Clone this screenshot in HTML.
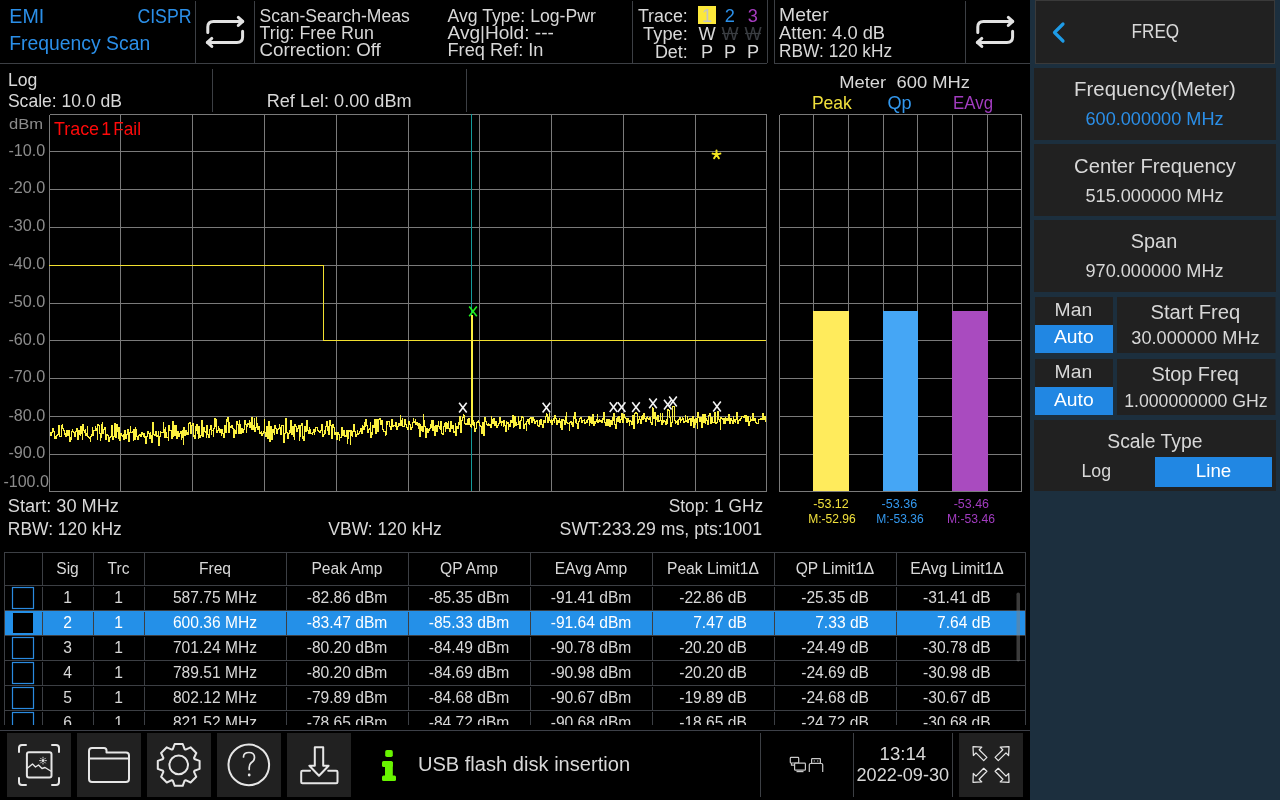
<!DOCTYPE html>
<html><head><meta charset="utf-8"><title>EMI Frequency Scan</title>
<style>
html,body{margin:0;padding:0;background:#000;width:1280px;height:800px;overflow:hidden}
svg{display:block;font-family:"Liberation Sans", sans-serif;will-change:transform}
</style></head><body>
<svg width="1280" height="800" viewBox="0 0 1280 800">
<rect width="1280" height="800" fill="#000"/>
<line x1="0" y1="63.5" x2="767" y2="63.5" stroke="#3c3f44" stroke-width="1"/>
<line x1="774" y1="63.5" x2="1030" y2="63.5" stroke="#3c3f44" stroke-width="1"/>
<line x1="195.5" y1="1" x2="195.5" y2="63" stroke="#3c3f44" stroke-width="1"/>
<line x1="254.5" y1="1" x2="254.5" y2="63" stroke="#3c3f44" stroke-width="1"/>
<line x1="632.5" y1="1" x2="632.5" y2="63" stroke="#3c3f44" stroke-width="1"/>
<line x1="767.5" y1="0" x2="767.5" y2="63" stroke="#3c3f44" stroke-width="1"/>
<line x1="774.5" y1="0" x2="774.5" y2="63" stroke="#3c3f44" stroke-width="1"/>
<line x1="965.5" y1="1" x2="965.5" y2="63" stroke="#3c3f44" stroke-width="1"/>
<text x="9.3" y="23.0" font-size="20.3" fill="#2b8fe8" text-anchor="start" textLength="34.9" lengthAdjust="spacingAndGlyphs">EMI</text>
<text x="137.4" y="23.0" font-size="20.3" fill="#2b8fe8" text-anchor="start" textLength="54.1" lengthAdjust="spacingAndGlyphs">CISPR</text>
<text x="9.3" y="49.7" font-size="19.6" fill="#2b8fe8" text-anchor="start" textLength="140.9" lengthAdjust="spacingAndGlyphs">Frequency Scan</text>
<text x="259.5" y="22.1" font-size="18.3" fill="#d8d8d8" text-anchor="start" textLength="150.2" lengthAdjust="spacingAndGlyphs">Scan-Search-Meas</text>
<text x="259.5" y="38.8" font-size="18.3" fill="#d8d8d8" text-anchor="start" textLength="114.3" lengthAdjust="spacingAndGlyphs">Trig: Free Run</text>
<text x="259.5" y="55.9" font-size="18.3" fill="#d8d8d8" text-anchor="start" textLength="121.3" lengthAdjust="spacingAndGlyphs">Correction: Off</text>
<text x="447.5" y="22.0" font-size="18.3" fill="#d8d8d8" text-anchor="start" textLength="148.3" lengthAdjust="spacingAndGlyphs">Avg Type: Log-Pwr</text>
<text x="447.5" y="38.8" font-size="18.3" fill="#d8d8d8" text-anchor="start" textLength="106.4" lengthAdjust="spacingAndGlyphs">Avg|Hold: ---</text>
<text x="447.5" y="55.7" font-size="18.3" fill="#d8d8d8" text-anchor="start" textLength="95.9" lengthAdjust="spacingAndGlyphs">Freq Ref: In</text>
<text x="637.9" y="22.0" font-size="18.3" fill="#d8d8d8" text-anchor="start" textLength="49.9" lengthAdjust="spacingAndGlyphs">Trace:</text>
<text x="643.1" y="39.7" font-size="18.3" fill="#d8d8d8" text-anchor="start" textLength="44.7" lengthAdjust="spacingAndGlyphs">Type:</text>
<text x="654.9" y="57.5" font-size="18.3" fill="#d8d8d8" text-anchor="start" textLength="32.9" lengthAdjust="spacingAndGlyphs">Det:</text>
<rect x="698" y="6" width="18" height="18" fill="#fce83a"/>
<text x="707.0" y="22.0" font-size="18.2" fill="#c4c4c4" text-anchor="middle">1</text>
<text x="729.7" y="22.0" font-size="18.2" fill="#2b8fe8" text-anchor="middle">2</text>
<text x="752.8" y="22.0" font-size="18.2" fill="#a63cc0" text-anchor="middle">3</text>
<text x="707.0" y="39.7" font-size="18.2" fill="#d8d8d8" text-anchor="middle">W</text>
<text x="730.0" y="39.7" font-size="18.2" fill="#3a3d42" text-anchor="middle">W</text>
<text x="753.0" y="39.7" font-size="18.2" fill="#3a3d42" text-anchor="middle">W</text>
<line x1="722" y1="33.5" x2="738" y2="33.5" stroke="#3a3d42" stroke-width="1.2"/>
<line x1="745" y1="33.5" x2="761" y2="33.5" stroke="#3a3d42" stroke-width="1.2"/>
<text x="707.0" y="57.5" font-size="18.2" fill="#d8d8d8" text-anchor="middle">P</text>
<text x="730.0" y="57.5" font-size="18.2" fill="#d8d8d8" text-anchor="middle">P</text>
<text x="753.0" y="57.5" font-size="18.2" fill="#d8d8d8" text-anchor="middle">P</text>
<text x="779.1" y="21.0" font-size="18.6" fill="#d8d8d8" text-anchor="start" textLength="49.5" lengthAdjust="spacingAndGlyphs">Meter</text>
<text x="779.1" y="38.9" font-size="18.3" fill="#d8d8d8" text-anchor="start" textLength="106.0" lengthAdjust="spacingAndGlyphs">Atten: 4.0 dB</text>
<text x="779.1" y="56.9" font-size="18.6" fill="#d8d8d8" text-anchor="start" textLength="113.0" lengthAdjust="spacingAndGlyphs">RBW: 120 kHz</text>
<g transform="translate(0,0)" fill="none" stroke="#e2e2e2" stroke-width="3" stroke-linecap="round" stroke-linejoin="round"><path d="M207.8,32.6 V27 Q207.8,21.4 213.5,21.4 H242.5"/><path d="M238.3,17.4 L242.8,21.4 L238.3,25.4"/><path d="M242.6,31.2 V37 Q242.6,42.4 237,42.4 H207.5"/><path d="M211.8,38.4 L207.3,42.4 L211.8,46.4"/></g>
<g transform="translate(770,0)" fill="none" stroke="#e2e2e2" stroke-width="3" stroke-linecap="round" stroke-linejoin="round"><path d="M207.8,32.6 V27 Q207.8,21.4 213.5,21.4 H242.5"/><path d="M238.3,17.4 L242.8,21.4 L238.3,25.4"/><path d="M242.6,31.2 V37 Q242.6,42.4 237,42.4 H207.5"/><path d="M211.8,38.4 L207.3,42.4 L211.8,46.4"/></g>
<line x1="212.5" y1="69" x2="212.5" y2="112" stroke="#3c3f44" stroke-width="1"/>
<line x1="466.5" y1="69" x2="466.5" y2="112" stroke="#3c3f44" stroke-width="1"/>
<text x="7.9" y="85.9" font-size="18.2" fill="#d8d8d8" text-anchor="start" textLength="29.4" lengthAdjust="spacingAndGlyphs">Log</text>
<text x="7.9" y="106.9" font-size="18.6" fill="#d8d8d8" text-anchor="start" textLength="114.2" lengthAdjust="spacingAndGlyphs">Scale: 10.0 dB</text>
<text x="266.7" y="106.9" font-size="18.6" fill="#d8d8d8" text-anchor="start" textLength="144.9" lengthAdjust="spacingAndGlyphs">Ref Lel: 0.00 dBm</text>
<text x="839.2" y="87.8" font-size="17.4" fill="#d8d8d8" text-anchor="start" textLength="130.9" lengthAdjust="spacingAndGlyphs">Meter  600 MHz</text>
<text x="811.9" y="108.6" font-size="17.9" fill="#f0e03c" text-anchor="start" textLength="40.0" lengthAdjust="spacingAndGlyphs">Peak</text>
<text x="887.5" y="108.6" font-size="17.9" fill="#3398ee" text-anchor="start" textLength="24.2" lengthAdjust="spacingAndGlyphs">Qp</text>
<text x="953.1" y="108.6" font-size="17.9" fill="#a23cc0" text-anchor="start" textLength="39.9" lengthAdjust="spacingAndGlyphs">EAvg</text>
<path d="M49.5,114.5V492.0M120.5,114.5V492.0M192.5,114.5V492.0M264.5,114.5V492.0M336.5,114.5V492.0M408.5,114.5V492.0M479.5,114.5V492.0M551.5,114.5V492.0M623.5,114.5V492.0M695.5,114.5V492.0M766.5,114.5V492.0M49.5,114.5H767.0M49.5,151.5H767.0M49.5,189.5H767.0M49.5,227.5H767.0M49.5,265.5H767.0M49.5,303.5H767.0M49.5,340.5H767.0M49.5,378.5H767.0M49.5,416.5H767.0M49.5,454.5H767.0M49.5,491.5H767.0" stroke="#7a7a7a" stroke-width="1" fill="none" shape-rendering="crispEdges"/>
<text x="9.1" y="128.8" font-size="14.8" fill="#8c8c8c" text-anchor="start" textLength="34.1" lengthAdjust="spacingAndGlyphs">dBm</text>
<text x="8.4" y="156.0" font-size="17.0" fill="#8c8c8c" text-anchor="start" textLength="36.9" lengthAdjust="spacingAndGlyphs">-10.0</text>
<text x="8.4" y="193.0" font-size="17.0" fill="#8c8c8c" text-anchor="start" textLength="36.9" lengthAdjust="spacingAndGlyphs">-20.0</text>
<text x="8.4" y="231.0" font-size="17.0" fill="#8c8c8c" text-anchor="start" textLength="36.9" lengthAdjust="spacingAndGlyphs">-30.0</text>
<text x="8.4" y="269.0" font-size="17.0" fill="#8c8c8c" text-anchor="start" textLength="36.9" lengthAdjust="spacingAndGlyphs">-40.0</text>
<text x="8.4" y="307.0" font-size="17.0" fill="#8c8c8c" text-anchor="start" textLength="36.9" lengthAdjust="spacingAndGlyphs">-50.0</text>
<text x="8.4" y="345.0" font-size="17.0" fill="#8c8c8c" text-anchor="start" textLength="36.9" lengthAdjust="spacingAndGlyphs">-60.0</text>
<text x="8.4" y="382.0" font-size="17.0" fill="#8c8c8c" text-anchor="start" textLength="36.9" lengthAdjust="spacingAndGlyphs">-70.0</text>
<text x="8.4" y="420.6" font-size="17.0" fill="#8c8c8c" text-anchor="start" textLength="36.9" lengthAdjust="spacingAndGlyphs">-80.0</text>
<text x="8.4" y="457.8" font-size="17.0" fill="#8c8c8c" text-anchor="start" textLength="36.9" lengthAdjust="spacingAndGlyphs">-90.0</text>
<text x="3.4" y="487.0" font-size="17.0" fill="#8c8c8c" text-anchor="start" textLength="45.4" lengthAdjust="spacingAndGlyphs">-100.0</text>
<text x="53.9" y="135.0" font-size="17.7" fill="#ff0a0a" text-anchor="start" textLength="45.2" lengthAdjust="spacingAndGlyphs">Trace</text>
<text x="106.2" y="135.0" font-size="17.7" fill="#ff0a0a" text-anchor="middle">1</text>
<text x="113.3" y="135.0" font-size="17.7" fill="#ff0a0a" text-anchor="start" textLength="27.7" lengthAdjust="spacingAndGlyphs">Fail</text>
<path d="M471.5,114V491" stroke="#139a9a" stroke-width="1" shape-rendering="crispEdges"/>
<path d="M49,265.5H323.5V340.5H766" stroke="#f2e030" stroke-width="1" fill="none" shape-rendering="crispEdges"/>
<path d="M50.5,432V436M51.5,432V436M52.5,428V433M53.5,428V432M54.5,431V439M55.5,436V439M56.5,435V439M57.5,434V436M58.5,425V435M59.5,425V437M60.5,436V437M61.5,425V437M62.5,424V429M63.5,428V431M64.5,430V435M65.5,433V437M66.5,430V437M67.5,430V436M68.5,430V436M69.5,430V442M70.5,437V442M71.5,431V440M72.5,429V432M73.5,431V433M74.5,432V437M75.5,431V437M76.5,428V432M77.5,428V440M78.5,430V440M79.5,430V435M80.5,426V436M81.5,426V434M82.5,424V440M83.5,424V431M84.5,430V433M85.5,429V436M86.5,433V436M87.5,426V437M88.5,436V438M89.5,437V439M90.5,436V442M91.5,434V437M92.5,427V436M93.5,430V436M94.5,430V431M95.5,426V431M96.5,428V431M97.5,424V440M98.5,424V426M99.5,425V434M100.5,433V441M101.5,424V438M102.5,422V434M103.5,429V434M104.5,427V430M105.5,427V440M106.5,434V440M107.5,434V436M108.5,435V442M109.5,437V442M110.5,436V438M111.5,425V437M112.5,425V440M113.5,436V440M114.5,423V437M115.5,423V438M116.5,424V438M117.5,424V432M118.5,427V439M119.5,427V441M120.5,433V441M121.5,433V436M122.5,435V437M123.5,434V440M124.5,430V440M125.5,430V439M126.5,434V439M127.5,429V435M128.5,429V442M129.5,432V442M130.5,426V433M131.5,432V433M132.5,431V433M133.5,429V441M134.5,429V440M135.5,427V440M136.5,429V437M137.5,436V440M138.5,435V440M139.5,434V436M140.5,434V437M141.5,432V437M142.5,432V435M143.5,433V437M144.5,433V438M145.5,436V444M146.5,436V444M147.5,431V437M148.5,431V434M149.5,433V439M150.5,432V439M151.5,435V443M152.5,422V443M153.5,422V435M154.5,434V436M155.5,431V436M156.5,431V437M157.5,435V437M158.5,431V446M159.5,436V446M160.5,431V437M161.5,432V433M162.5,432V433M163.5,422V433M164.5,429V438M165.5,427V438M166.5,432V438M167.5,437V438M168.5,425V441M169.5,425V431M170.5,430V431M171.5,430V439M172.5,421V439M173.5,421V437M174.5,425V436M175.5,425V436M176.5,425V439M177.5,431V439M178.5,431V437M179.5,433V437M180.5,431V434M181.5,431V440M182.5,430V438M183.5,427V445M184.5,427V436M185.5,430V436M186.5,430V435M187.5,432V435M188.5,423V435M189.5,422V424M190.5,422V434M191.5,425V434M192.5,423V426M193.5,423V437M194.5,435V439M195.5,426V439M196.5,424V431M197.5,424V434M198.5,426V439M199.5,426V438M200.5,435V438M201.5,420V436M202.5,420V437M203.5,427V437M204.5,427V432M205.5,431V433M206.5,425V438M207.5,425V435M208.5,434V438M209.5,429V438M210.5,425V430M211.5,425V435M212.5,430V431M213.5,428V437M214.5,418V429M215.5,418V427M216.5,419V433M217.5,430V433M218.5,426V431M219.5,428V433M220.5,429V433M221.5,429V436M222.5,429V434M223.5,433V438M224.5,425V438M225.5,425V433M226.5,419V433M227.5,417V422M228.5,417V433M229.5,422V433M230.5,426V428M231.5,425V428M232.5,425V429M233.5,428V438M234.5,429V438M235.5,430V434M236.5,421V434M237.5,421V425M238.5,424V434M239.5,420V434M240.5,424V434M241.5,428V434M242.5,428V433M243.5,429V433M244.5,420V430M245.5,420V425M246.5,424V433M247.5,423V427M248.5,423V425M249.5,420V428M250.5,422V428M251.5,417V430M252.5,417V430M253.5,425V430M254.5,418V432M255.5,427V432M256.5,417V428M257.5,423V430M258.5,426V430M259.5,426V434M260.5,432V434M261.5,431V436M262.5,433V436M263.5,431V434M264.5,419V433M265.5,432V437M266.5,426V437M267.5,426V439M268.5,421V439M269.5,421V442M270.5,426V442M271.5,426V440M272.5,429V440M273.5,429V433M274.5,425V435M275.5,425V429M276.5,428V434M277.5,429V434M278.5,428V430M279.5,424V429M280.5,427V435M281.5,425V435M282.5,425V426M283.5,425V443M284.5,433V443M285.5,418V434M286.5,418V433M287.5,432V439M288.5,433V439M289.5,430V434M290.5,420V433M291.5,420V435M292.5,426V435M293.5,426V437M294.5,424V440M295.5,424V427M296.5,426V432M297.5,428V432M298.5,425V429M299.5,425V441M300.5,425V437M301.5,423V426M302.5,423V439M303.5,436V441M304.5,426V441M305.5,426V432M306.5,420V432M307.5,420V431M308.5,430V434M309.5,427V434M310.5,429V434M311.5,433V434M312.5,432V435M313.5,429V433M314.5,429V435M315.5,427V432M316.5,427V428M317.5,427V431M318.5,430V432M319.5,431V433M320.5,430V433M321.5,424V431M322.5,424V437M323.5,434V437M324.5,430V435M325.5,426V434M326.5,421V427M327.5,421V431M328.5,426V435M329.5,420V435M330.5,420V426M331.5,425V439M332.5,424V439M333.5,424V428M334.5,427V435M335.5,432V435M336.5,432V440M337.5,432V440M338.5,432V435M339.5,434V441M340.5,437V438M341.5,427V438M342.5,427V436M343.5,430V436M344.5,430V437M345.5,435V437M346.5,430V437M347.5,430V444M348.5,430V439M349.5,430V432M350.5,430V445M351.5,430V436M352.5,431V437M353.5,424V432M354.5,424V432M355.5,431V437M356.5,434V437M357.5,430V435M358.5,433V435M359.5,431V434M360.5,428V432M361.5,428V434M362.5,425V434M363.5,426V430M364.5,422V430M365.5,419V427M366.5,419V426M367.5,425V433M368.5,429V433M369.5,428V430M370.5,422V438M371.5,432V438M372.5,425V435M373.5,425V428M374.5,419V428M375.5,419V434M376.5,419V434M377.5,419V432M378.5,419V432M379.5,418V420M380.5,418V425M381.5,420V425M382.5,420V430M383.5,429V432M384.5,431V432M385.5,431V436M386.5,421V435M387.5,421V425M388.5,421V422M389.5,421V427M390.5,426V430M391.5,419V430M392.5,419V427M393.5,425V427M394.5,425V426M395.5,422V427M396.5,422V430M397.5,426V430M398.5,423V427M399.5,423V426M400.5,415V426M401.5,420V426M402.5,418V427M403.5,426V427M404.5,419V427M405.5,419V425M406.5,424V428M407.5,427V430M408.5,421V430M409.5,421V425M410.5,424V430M411.5,427V430M412.5,422V428M413.5,418V423M414.5,421V423M415.5,419V425M416.5,422V425M417.5,422V426M418.5,423V429M419.5,423V437M420.5,424V437M421.5,426V431M422.5,426V432M423.5,414V432M424.5,420V427M425.5,426V438M426.5,428V438M427.5,428V433M428.5,429V433M429.5,428V431M430.5,424V429M431.5,420V428M432.5,420V431M433.5,420V431M434.5,426V436M435.5,425V436M436.5,425V432M437.5,425V432M438.5,421V427M439.5,426V429M440.5,421V430M441.5,421V434M442.5,433V435M443.5,426V435M444.5,423V427M445.5,422V432M446.5,422V429M447.5,423V429M448.5,421V429M449.5,428V432M450.5,421V432M451.5,421V429M452.5,425V429M453.5,425V433M454.5,431V433M455.5,423V436M456.5,426V436M457.5,426V429M458.5,422V429M459.5,416V425M460.5,416V433M461.5,420V433M462.5,417V421M463.5,414V418M464.5,415V424M465.5,423V425M466.5,423V425M467.5,419V425M468.5,418V425M469.5,418V425M470.5,424V427M471.5,424V428M472.5,420V425M473.5,420V426M474.5,422V432M475.5,428V432M476.5,422V429M477.5,421V423M478.5,420V423M479.5,422V426M480.5,425V427M481.5,426V434M482.5,422V434M483.5,422V436M484.5,417V436M485.5,417V422M486.5,421V425M487.5,424V426M488.5,423V426M489.5,424V426M490.5,424V428M491.5,416V428M492.5,419V424M493.5,418V424M494.5,418V426M495.5,421V426M496.5,421V428M497.5,425V428M498.5,423V426M499.5,417V424M500.5,417V423M501.5,421V426M502.5,421V423M503.5,420V427M504.5,420V426M505.5,425V432M506.5,421V432M507.5,422V424M508.5,422V430M509.5,424V427M510.5,420V427M511.5,420V423M512.5,415V423M513.5,415V428M514.5,416V427M515.5,416V426M516.5,422V426M517.5,424V425M518.5,416V425M519.5,421V429M520.5,420V429M521.5,416V421M522.5,416V418M523.5,417V429M524.5,424V429M525.5,423V425M526.5,421V431M527.5,419V422M528.5,419V424M529.5,418V425M530.5,417V419M531.5,417V423M532.5,417V423M533.5,417V421M534.5,419V424M535.5,421V424M536.5,420V422M537.5,420V426M538.5,425V427M539.5,420V427M540.5,419V425M541.5,419V425M542.5,424V428M543.5,420V428M544.5,420V423M545.5,416V423M546.5,413V417M547.5,414V423M548.5,417V423M549.5,413V421M550.5,420V423M551.5,419V425M552.5,420V425M553.5,418V421M554.5,415V423M555.5,415V419M556.5,418V425M557.5,420V425M558.5,420V423M559.5,418V423M560.5,421V428M561.5,419V430M562.5,419V430M563.5,419V421M564.5,420V425M565.5,416V425M566.5,412V423M567.5,422V424M568.5,423V424M569.5,422V431M570.5,421V423M571.5,421V425M572.5,422V427M573.5,416V427M574.5,412V419M575.5,412V423M576.5,419V424M577.5,423V429M578.5,421V429M579.5,418V422M580.5,417V419M581.5,417V423M582.5,420V423M583.5,420V421M584.5,419V424M585.5,422V424M586.5,420V423M587.5,419V423M588.5,416V420M589.5,416V426M590.5,417V423M591.5,417V424M592.5,414V424M593.5,414V426M594.5,421V426M595.5,421V424M596.5,419V422M597.5,414V423M598.5,420V423M599.5,419V422M600.5,420V422M601.5,420V423M602.5,418V423M603.5,412V420M604.5,412V423M605.5,422V426M606.5,419V426M607.5,419V426M608.5,419V426M609.5,419V427M610.5,420V427M611.5,420V425M612.5,417V425M613.5,413V421M614.5,413V425M615.5,424V429M616.5,418V429M617.5,417V422M618.5,416V422M619.5,416V423M620.5,419V423M621.5,413V420M622.5,413V423M623.5,414V423M624.5,414V418M625.5,417V419M626.5,418V423M627.5,418V423M628.5,418V422M629.5,420V426M630.5,420V422M631.5,421V425M632.5,415V425M633.5,415V429M634.5,413V429M635.5,412V414M636.5,412V414M637.5,413V424M638.5,419V423M639.5,416V420M640.5,419V424M641.5,416V424M642.5,415V420M643.5,413V420M644.5,413V419M645.5,418V422M646.5,417V422M647.5,416V419M648.5,418V420M649.5,417V420M650.5,417V423M651.5,422V425M652.5,407V425M653.5,408V419M654.5,412V419M655.5,412V426M656.5,417V420M657.5,415V422M658.5,415V422M659.5,420V422M660.5,413V421M661.5,420V425M662.5,413V425M663.5,420V423M664.5,420V422M665.5,421V425M666.5,419V425M667.5,409V424M668.5,409V411M669.5,410V418M670.5,417V427M671.5,422V427M672.5,406V423M673.5,406V407M674.5,406V421M675.5,420V424M676.5,421V423M677.5,420V425M678.5,419V425M679.5,417V420M680.5,417V423M681.5,419V421M682.5,417V420M683.5,418V423M684.5,421V423M685.5,415V422M686.5,420V422M687.5,416V423M688.5,419V423M689.5,418V420M690.5,418V426M691.5,418V426M692.5,416V422M693.5,416V428M694.5,419V428M695.5,418V425M696.5,418V423M697.5,412V429M698.5,412V418M699.5,417V422M700.5,417V422M701.5,417V428M702.5,414V428M703.5,414V423M704.5,414V423M705.5,414V424M706.5,418V421M707.5,420V425M708.5,415V425M709.5,413V416M710.5,413V424M711.5,417V424M712.5,417V423M713.5,422V423M714.5,412V423M715.5,412V424M716.5,422V424M717.5,411V423M718.5,411V420M719.5,419V422M720.5,417V430M721.5,417V419M722.5,418V420M723.5,418V424M724.5,418V424M725.5,417V424M726.5,418V421M727.5,418V421M728.5,414V421M729.5,414V424M730.5,418V424M731.5,418V421M732.5,420V424M733.5,416V424M734.5,419V422M735.5,419V423M736.5,412V420M737.5,412V424M738.5,420V424M739.5,419V421M740.5,418V421M741.5,416V419M742.5,416V417M743.5,416V418M744.5,415V418M745.5,415V422M746.5,415V422M747.5,416V422M748.5,416V426M749.5,421V426M750.5,417V422M751.5,419V421M752.5,413V421M753.5,413V421M754.5,418V421M755.5,418V423M756.5,422V424M757.5,423V424M758.5,419V424M759.5,419V420M760.5,418V420M761.5,418V420M762.5,413V420M763.5,413V420M764.5,416V420M765.5,416V422" stroke="#fbf040" stroke-width="1" fill="none" shape-rendering="crispEdges"/>
<rect x="471" y="315" width="2" height="110" fill="#fbf040"/>
<path d="M469.2,306.40000000000003L476.8,316.2M476.8,306.40000000000003L469.2,316.2" stroke="#22ee22" stroke-width="1.6" fill="none"/>
<path d="M459.09999999999997,402.8L466.7,412.59999999999997M466.7,402.8L459.09999999999997,412.59999999999997" stroke="#f4f4f4" stroke-width="1.6" fill="none"/>
<path d="M542.6,402.8L550.1999999999999,412.59999999999997M550.1999999999999,402.8L542.6,412.59999999999997" stroke="#f4f4f4" stroke-width="1.6" fill="none"/>
<path d="M609.7,402.3L617.3,412.09999999999997M617.3,402.3L609.7,412.09999999999997" stroke="#f4f4f4" stroke-width="1.6" fill="none"/>
<path d="M617.8000000000001,402.3L625.4,412.09999999999997M625.4,402.3L617.8000000000001,412.09999999999997" stroke="#f4f4f4" stroke-width="1.6" fill="none"/>
<path d="M632.2,402.3L639.8,412.09999999999997M639.8,402.3L632.2,412.09999999999997" stroke="#f4f4f4" stroke-width="1.6" fill="none"/>
<path d="M649.2,398.40000000000003L656.8,408.2M656.8,398.40000000000003L649.2,408.2" stroke="#f4f4f4" stroke-width="1.6" fill="none"/>
<path d="M664.0,399.8L671.5999999999999,409.59999999999997M671.5999999999999,399.8L664.0,409.59999999999997" stroke="#f4f4f4" stroke-width="1.6" fill="none"/>
<path d="M669.2,396.6L676.8,406.4M676.8,396.6L669.2,406.4" stroke="#f4f4f4" stroke-width="1.6" fill="none"/>
<path d="M713.2,401.6L720.8,411.4M720.8,401.6L713.2,411.4" stroke="#f4f4f4" stroke-width="1.6" fill="none"/>
<path d="M716.5,150.6V154.5M712.6,153.6L716.5,154.5L720.4,153.6M714.1,158.2L716.5,154.5L718.9,158.2" stroke="#f5e620" stroke-width="2" stroke-linecap="round" fill="none"/>
<text x="7.8" y="512.0" font-size="18.0" fill="#d8d8d8" text-anchor="start" textLength="111.1" lengthAdjust="spacingAndGlyphs">Start: 30 MHz</text>
<text x="7.8" y="535.0" font-size="18.3" fill="#d8d8d8" text-anchor="start" textLength="114.0" lengthAdjust="spacingAndGlyphs">RBW: 120 kHz</text>
<text x="328.3" y="535.2" font-size="18.3" fill="#d8d8d8" text-anchor="start" textLength="113.5" lengthAdjust="spacingAndGlyphs">VBW: 120 kHz</text>
<text x="668.7" y="512.0" font-size="18.0" fill="#d8d8d8" text-anchor="start" textLength="94.4" lengthAdjust="spacingAndGlyphs">Stop: 1 GHz</text>
<text x="559.6" y="535.2" font-size="18.3" fill="#d8d8d8" text-anchor="start" textLength="202.4" lengthAdjust="spacingAndGlyphs">SWT:233.29 ms, pts:1001</text>
<path d="M779.5,114.5V491.5M813.5,114.5V491.5M848.5,114.5V491.5M883.5,114.5V491.5M917.5,114.5V491.5M952.5,114.5V491.5M987.5,114.5V491.5M1021.5,114.5V491.5M779.5,114.5H1021.5M779.5,151.5H1021.5M779.5,189.5H1021.5M779.5,227.5H1021.5M779.5,265.5H1021.5M779.5,303.5H1021.5M779.5,340.5H1021.5M779.5,378.5H1021.5M779.5,416.5H1021.5M779.5,454.5H1021.5M779.5,491.5H1021.5" stroke="#7a7a7a" stroke-width="1" fill="none" shape-rendering="crispEdges"/>
<rect x="813" y="311" width="36" height="180" fill="#ffeb5c"/>
<rect x="883" y="311" width="35" height="180" fill="#45a6f5"/>
<rect x="952" y="311" width="36" height="180" fill="#a94bbf"/>
<text x="813.3" y="507.5" font-size="11.9" fill="#f0e03c" text-anchor="start" textLength="35.5" lengthAdjust="spacingAndGlyphs">-53.12</text>
<text x="808.2" y="522.5" font-size="11.9" fill="#f0e03c" text-anchor="start" textLength="47.5" lengthAdjust="spacingAndGlyphs">M:-52.96</text>
<text x="881.6" y="507.5" font-size="11.9" fill="#3398ee" text-anchor="start" textLength="35.5" lengthAdjust="spacingAndGlyphs">-53.36</text>
<text x="876.2" y="522.5" font-size="11.9" fill="#3398ee" text-anchor="start" textLength="47.6" lengthAdjust="spacingAndGlyphs">M:-53.36</text>
<text x="953.7" y="507.5" font-size="11.9" fill="#a23cc0" text-anchor="start" textLength="35.3" lengthAdjust="spacingAndGlyphs">-53.46</text>
<text x="947.0" y="522.5" font-size="11.9" fill="#a23cc0" text-anchor="start" textLength="47.9" lengthAdjust="spacingAndGlyphs">M:-53.46</text>
<path d="M4.5,725V552.5H1025.5V725" fill="none" stroke="#3c3f44" stroke-width="1" shape-rendering="crispEdges"/>
<rect x="5" y="611" width="1020" height="24" fill="#2490e8"/>
<path d="M42.5,553V585M93.5,553V585M144.5,553V585M286.5,553V585M408.5,553V585M530.5,553V585M652.5,553V585M774.5,553V585M896.5,553V585M42.5,587V610M93.5,587V610M144.5,587V610M286.5,587V610M408.5,587V610M530.5,587V610M652.5,587V610M774.5,587V610M896.5,587V610M42.5,612V635M93.5,612V635M144.5,612V635M286.5,612V635M408.5,612V635M530.5,612V635M652.5,612V635M774.5,612V635M896.5,612V635M42.5,637V660M93.5,637V660M144.5,637V660M286.5,637V660M408.5,637V660M530.5,637V660M652.5,637V660M774.5,637V660M896.5,637V660M42.5,662V685M93.5,662V685M144.5,662V685M286.5,662V685M408.5,662V685M530.5,662V685M652.5,662V685M774.5,662V685M896.5,662V685M42.5,687V710M93.5,687V710M144.5,687V710M286.5,687V710M408.5,687V710M530.5,687V710M652.5,687V710M774.5,687V710M896.5,687V710M42.5,712V725M93.5,712V725M144.5,712V725M286.5,712V725M408.5,712V725M530.5,712V725M652.5,712V725M774.5,712V725M896.5,712V725M5,585.5H1025M5,610.5H1025M5,635.5H1025M5,660.5H1025M5,685.5H1025M5,710.5H1025" stroke="#3c3f44" stroke-width="1" fill="none" shape-rendering="crispEdges"/>
<text x="67.5" y="573.8" font-size="16.0" fill="#d8d8d8" text-anchor="middle" textLength="22.5" lengthAdjust="spacingAndGlyphs">Sig</text>
<text x="118.5" y="573.8" font-size="16.0" fill="#d8d8d8" text-anchor="middle" textLength="21.9" lengthAdjust="spacingAndGlyphs">Trc</text>
<text x="215.0" y="573.8" font-size="16.0" fill="#d8d8d8" text-anchor="middle" textLength="32.1" lengthAdjust="spacingAndGlyphs">Freq</text>
<text x="347.0" y="573.8" font-size="16.0" fill="#d8d8d8" text-anchor="middle" textLength="71.1" lengthAdjust="spacingAndGlyphs">Peak Amp</text>
<text x="469.0" y="573.8" font-size="16.0" fill="#d8d8d8" text-anchor="middle" textLength="57.8" lengthAdjust="spacingAndGlyphs">QP Amp</text>
<text x="591.0" y="573.8" font-size="16.0" fill="#d8d8d8" text-anchor="middle" textLength="72.6" lengthAdjust="spacingAndGlyphs">EAvg Amp</text>
<text x="713.0" y="573.8" font-size="16.0" fill="#d8d8d8" text-anchor="middle" textLength="91.9" lengthAdjust="spacingAndGlyphs">Peak Limit1Δ</text>
<text x="835.0" y="573.8" font-size="16.0" fill="#d8d8d8" text-anchor="middle" textLength="78.6" lengthAdjust="spacingAndGlyphs">QP Limit1Δ</text>
<text x="956.9" y="573.8" font-size="16.0" fill="#d8d8d8" text-anchor="middle" textLength="93.4" lengthAdjust="spacingAndGlyphs">EAvg Limit1Δ</text>
<svg x="0" y="0" width="1280" height="725" overflow="hidden"><g>
<text x="67.5" y="602.5" font-size="16.0" fill="#d8d8d8" text-anchor="middle" textLength="8.7" lengthAdjust="spacingAndGlyphs">1</text>
<text x="118.5" y="602.5" font-size="16.0" fill="#d8d8d8" text-anchor="middle" textLength="8.7" lengthAdjust="spacingAndGlyphs">1</text>
<text x="215.0" y="602.5" font-size="16.0" fill="#d8d8d8" text-anchor="middle" textLength="84.1" lengthAdjust="spacingAndGlyphs">587.75 MHz</text>
<text x="347.0" y="602.5" font-size="16.0" fill="#d8d8d8" text-anchor="middle" textLength="80.6" lengthAdjust="spacingAndGlyphs">-82.86 dBm</text>
<text x="469.0" y="602.5" font-size="16.0" fill="#d8d8d8" text-anchor="middle" textLength="80.6" lengthAdjust="spacingAndGlyphs">-85.35 dBm</text>
<text x="591.0" y="602.5" font-size="16.0" fill="#d8d8d8" text-anchor="middle" textLength="80.6" lengthAdjust="spacingAndGlyphs">-91.41 dBm</text>
<text x="713.0" y="602.5" font-size="16.0" fill="#d8d8d8" text-anchor="middle" textLength="67.6" lengthAdjust="spacingAndGlyphs">-22.86 dB</text>
<text x="835.0" y="602.5" font-size="16.0" fill="#d8d8d8" text-anchor="middle" textLength="67.6" lengthAdjust="spacingAndGlyphs">-25.35 dB</text>
<text x="956.9" y="602.5" font-size="16.0" fill="#d8d8d8" text-anchor="middle" textLength="67.6" lengthAdjust="spacingAndGlyphs">-31.41 dB</text>
<rect x="12.5" y="587.5" width="21" height="21" fill="none" stroke="#2a8ae0" stroke-width="1.2"/>
<text x="67.5" y="627.5" font-size="16.0" fill="#ffffff" text-anchor="middle" textLength="8.7" lengthAdjust="spacingAndGlyphs">2</text>
<text x="118.5" y="627.5" font-size="16.0" fill="#ffffff" text-anchor="middle" textLength="8.7" lengthAdjust="spacingAndGlyphs">1</text>
<text x="215.0" y="627.5" font-size="16.0" fill="#ffffff" text-anchor="middle" textLength="84.1" lengthAdjust="spacingAndGlyphs">600.36 MHz</text>
<text x="347.0" y="627.5" font-size="16.0" fill="#ffffff" text-anchor="middle" textLength="80.6" lengthAdjust="spacingAndGlyphs">-83.47 dBm</text>
<text x="469.0" y="627.5" font-size="16.0" fill="#ffffff" text-anchor="middle" textLength="80.6" lengthAdjust="spacingAndGlyphs">-85.33 dBm</text>
<text x="591.0" y="627.5" font-size="16.0" fill="#ffffff" text-anchor="middle" textLength="80.6" lengthAdjust="spacingAndGlyphs">-91.64 dBm</text>
<text x="747.0" y="627.5" font-size="16.0" fill="#ffffff" text-anchor="end" textLength="53.8" lengthAdjust="spacingAndGlyphs">7.47 dB</text>
<text x="869.0" y="627.5" font-size="16.0" fill="#ffffff" text-anchor="end" textLength="53.8" lengthAdjust="spacingAndGlyphs">7.33 dB</text>
<text x="990.9" y="627.5" font-size="16.0" fill="#ffffff" text-anchor="end" textLength="53.8" lengthAdjust="spacingAndGlyphs">7.64 dB</text>
<rect x="13" y="613" width="20" height="20" fill="#000"/>
<text x="67.5" y="652.5" font-size="16.0" fill="#d8d8d8" text-anchor="middle" textLength="8.7" lengthAdjust="spacingAndGlyphs">3</text>
<text x="118.5" y="652.5" font-size="16.0" fill="#d8d8d8" text-anchor="middle" textLength="8.7" lengthAdjust="spacingAndGlyphs">1</text>
<text x="215.0" y="652.5" font-size="16.0" fill="#d8d8d8" text-anchor="middle" textLength="84.1" lengthAdjust="spacingAndGlyphs">701.24 MHz</text>
<text x="347.0" y="652.5" font-size="16.0" fill="#d8d8d8" text-anchor="middle" textLength="80.6" lengthAdjust="spacingAndGlyphs">-80.20 dBm</text>
<text x="469.0" y="652.5" font-size="16.0" fill="#d8d8d8" text-anchor="middle" textLength="80.6" lengthAdjust="spacingAndGlyphs">-84.49 dBm</text>
<text x="591.0" y="652.5" font-size="16.0" fill="#d8d8d8" text-anchor="middle" textLength="80.6" lengthAdjust="spacingAndGlyphs">-90.78 dBm</text>
<text x="713.0" y="652.5" font-size="16.0" fill="#d8d8d8" text-anchor="middle" textLength="67.6" lengthAdjust="spacingAndGlyphs">-20.20 dB</text>
<text x="835.0" y="652.5" font-size="16.0" fill="#d8d8d8" text-anchor="middle" textLength="67.6" lengthAdjust="spacingAndGlyphs">-24.49 dB</text>
<text x="956.9" y="652.5" font-size="16.0" fill="#d8d8d8" text-anchor="middle" textLength="67.6" lengthAdjust="spacingAndGlyphs">-30.78 dB</text>
<rect x="12.5" y="637.5" width="21" height="21" fill="none" stroke="#2a8ae0" stroke-width="1.2"/>
<text x="67.5" y="677.5" font-size="16.0" fill="#d8d8d8" text-anchor="middle" textLength="8.7" lengthAdjust="spacingAndGlyphs">4</text>
<text x="118.5" y="677.5" font-size="16.0" fill="#d8d8d8" text-anchor="middle" textLength="8.7" lengthAdjust="spacingAndGlyphs">1</text>
<text x="215.0" y="677.5" font-size="16.0" fill="#d8d8d8" text-anchor="middle" textLength="84.1" lengthAdjust="spacingAndGlyphs">789.51 MHz</text>
<text x="347.0" y="677.5" font-size="16.0" fill="#d8d8d8" text-anchor="middle" textLength="80.6" lengthAdjust="spacingAndGlyphs">-80.20 dBm</text>
<text x="469.0" y="677.5" font-size="16.0" fill="#d8d8d8" text-anchor="middle" textLength="80.6" lengthAdjust="spacingAndGlyphs">-84.69 dBm</text>
<text x="591.0" y="677.5" font-size="16.0" fill="#d8d8d8" text-anchor="middle" textLength="80.6" lengthAdjust="spacingAndGlyphs">-90.98 dBm</text>
<text x="713.0" y="677.5" font-size="16.0" fill="#d8d8d8" text-anchor="middle" textLength="67.6" lengthAdjust="spacingAndGlyphs">-20.20 dB</text>
<text x="835.0" y="677.5" font-size="16.0" fill="#d8d8d8" text-anchor="middle" textLength="67.6" lengthAdjust="spacingAndGlyphs">-24.69 dB</text>
<text x="956.9" y="677.5" font-size="16.0" fill="#d8d8d8" text-anchor="middle" textLength="67.6" lengthAdjust="spacingAndGlyphs">-30.98 dB</text>
<rect x="12.5" y="662.5" width="21" height="21" fill="none" stroke="#2a8ae0" stroke-width="1.2"/>
<text x="67.5" y="702.5" font-size="16.0" fill="#d8d8d8" text-anchor="middle" textLength="8.7" lengthAdjust="spacingAndGlyphs">5</text>
<text x="118.5" y="702.5" font-size="16.0" fill="#d8d8d8" text-anchor="middle" textLength="8.7" lengthAdjust="spacingAndGlyphs">1</text>
<text x="215.0" y="702.5" font-size="16.0" fill="#d8d8d8" text-anchor="middle" textLength="84.1" lengthAdjust="spacingAndGlyphs">802.12 MHz</text>
<text x="347.0" y="702.5" font-size="16.0" fill="#d8d8d8" text-anchor="middle" textLength="80.6" lengthAdjust="spacingAndGlyphs">-79.89 dBm</text>
<text x="469.0" y="702.5" font-size="16.0" fill="#d8d8d8" text-anchor="middle" textLength="80.6" lengthAdjust="spacingAndGlyphs">-84.68 dBm</text>
<text x="591.0" y="702.5" font-size="16.0" fill="#d8d8d8" text-anchor="middle" textLength="80.6" lengthAdjust="spacingAndGlyphs">-90.67 dBm</text>
<text x="713.0" y="702.5" font-size="16.0" fill="#d8d8d8" text-anchor="middle" textLength="67.6" lengthAdjust="spacingAndGlyphs">-19.89 dB</text>
<text x="835.0" y="702.5" font-size="16.0" fill="#d8d8d8" text-anchor="middle" textLength="67.6" lengthAdjust="spacingAndGlyphs">-24.68 dB</text>
<text x="956.9" y="702.5" font-size="16.0" fill="#d8d8d8" text-anchor="middle" textLength="67.6" lengthAdjust="spacingAndGlyphs">-30.67 dB</text>
<rect x="12.5" y="687.5" width="21" height="21" fill="none" stroke="#2a8ae0" stroke-width="1.2"/>
<text x="67.5" y="727.5" font-size="16.0" fill="#d8d8d8" text-anchor="middle" textLength="8.7" lengthAdjust="spacingAndGlyphs">6</text>
<text x="118.5" y="727.5" font-size="16.0" fill="#d8d8d8" text-anchor="middle" textLength="8.7" lengthAdjust="spacingAndGlyphs">1</text>
<text x="215.0" y="727.5" font-size="16.0" fill="#d8d8d8" text-anchor="middle" textLength="84.1" lengthAdjust="spacingAndGlyphs">821.52 MHz</text>
<text x="347.0" y="727.5" font-size="16.0" fill="#d8d8d8" text-anchor="middle" textLength="80.6" lengthAdjust="spacingAndGlyphs">-78.65 dBm</text>
<text x="469.0" y="727.5" font-size="16.0" fill="#d8d8d8" text-anchor="middle" textLength="80.6" lengthAdjust="spacingAndGlyphs">-84.72 dBm</text>
<text x="591.0" y="727.5" font-size="16.0" fill="#d8d8d8" text-anchor="middle" textLength="80.6" lengthAdjust="spacingAndGlyphs">-90.68 dBm</text>
<text x="713.0" y="727.5" font-size="16.0" fill="#d8d8d8" text-anchor="middle" textLength="67.6" lengthAdjust="spacingAndGlyphs">-18.65 dB</text>
<text x="835.0" y="727.5" font-size="16.0" fill="#d8d8d8" text-anchor="middle" textLength="67.6" lengthAdjust="spacingAndGlyphs">-24.72 dB</text>
<text x="956.9" y="727.5" font-size="16.0" fill="#d8d8d8" text-anchor="middle" textLength="67.6" lengthAdjust="spacingAndGlyphs">-30.68 dB</text>
<rect x="12.5" y="712.5" width="21" height="21" fill="none" stroke="#2a8ae0" stroke-width="1.2"/>
</g></svg>
<rect x="1016.5" y="592.5" width="3.5" height="69" fill="rgba(128,128,128,0.47)" rx="1.7"/>
<line x1="0" y1="730.5" x2="1030" y2="730.5" stroke="#3d4048" stroke-width="1"/>
<rect x="7" y="733" width="64" height="64" fill="#212121"/>
<rect x="77" y="733" width="64" height="64" fill="#212121"/>
<rect x="147" y="733" width="64" height="64" fill="#212121"/>
<rect x="217" y="733" width="64" height="64" fill="#212121"/>
<rect x="287" y="733" width="64" height="64" fill="#212121"/>
<g fill="none" stroke="#e6e6e6" stroke-width="2" stroke-linecap="round" stroke-linejoin="round"><path d="M19,752V748Q19,745 22,745H26M52,745H56Q59,745 59,748V752M59,778V782Q59,785 56,785H52M26,785H22Q19,785 19,782V778"/><rect x="26.9" y="752.2" width="24.6" height="25.3" rx="2"/><path d="M27,768.5L32.5,764L35.5,767L38.5,765L42,768.5L45,767.5L51.5,771.5" stroke-width="1.4"/><circle cx="43" cy="760.6" r="1.5" fill="#e6e6e6" stroke="none"/><path d="M43,757.2V758.2M43,763V764M39.6,760.6H40.6M45.4,760.6H46.4M40.6,758.2L41.3,758.9M45.4,758.2L44.7,758.9M40.6,763L41.3,762.3M45.4,763L44.7,762.3" stroke-width="0.9"/></g>
<g fill="none" stroke="#e6e6e6" stroke-width="2" stroke-linecap="round" stroke-linejoin="round"><path d="M89,751Q89,748 92,748H104Q106.5,748 106.5,750.5V752.5H126Q129,752.5 129,755.5V779Q129,782 126,782H92Q89,782 89,779Z"/><path d="M89,758.5H129"/></g>
<g fill="none" stroke="#e6e6e6" stroke-width="2" stroke-linecap="round" stroke-linejoin="round" stroke-width="1.8"><path d="M172.8,749.2 L174.7,744.0 L182.7,744.0 L184.6,749.2 L185.6,749.6 L190.6,747.3 L196.3,753.0 L194.0,758.0 L194.4,759.0 L199.6,760.9 L199.6,768.9 L194.4,770.8 L194.0,771.8 L196.3,776.8 L190.6,782.5 L185.6,780.2 L184.6,780.6 L182.7,785.8 L174.7,785.8 L172.8,780.6 L171.8,780.2 L166.8,782.5 L161.1,776.8 L163.4,771.8 L163.0,770.8 L157.8,768.9 L157.8,760.9 L163.0,759.0 L163.4,758.0 L161.1,753.0 L166.8,747.3 L171.8,749.6Z"/><circle cx="178.7" cy="764.9" r="9.3"/></g>
<g fill="none" stroke="#e6e6e6" stroke-width="2" stroke-linecap="round" stroke-linejoin="round" stroke-width="1.8"><circle cx="248.8" cy="764.9" r="20.3"/><path d="M243.5,757Q243.5,752.5 249,752.5Q254.5,752.5 254.5,757.5Q254.5,760.5 251.5,762.5Q249.2,764 249.2,767.5V769.5" stroke-width="1.7"/><circle cx="249.2" cy="775" r="1.4" fill="#e6e6e6" stroke="none"/></g>
<g fill="none" stroke="#e6e6e6" stroke-width="2" stroke-linecap="round" stroke-linejoin="round" stroke-width="1.5"><path d="M314.8,747.2H323.2V765.8H328.6L319,775.8L309.4,765.8H314.8Z"/><path d="M310,770.8H302.5Q301.2,770.8 301.2,772.1V782Q301.2,783.2 302.5,783.2H336.2Q337.5,783.2 337.5,782V772.1Q337.5,770.8 336.2,770.8H328.2"/></g>
<g fill="#68f400"><rect x="385.2" y="750" width="7.6" height="7" rx="1.8"/><rect x="382" y="761" width="10.8" height="6" rx="1.5"/><rect x="385" y="762" width="7.8" height="16"/><rect x="382" y="775.5" width="14" height="5.5" rx="1.5"/></g>
<text x="417.9" y="771.0" font-size="20.1" fill="#d8d8d8" text-anchor="start" textLength="212.2" lengthAdjust="spacingAndGlyphs">USB flash disk insertion</text>
<line x1="760.5" y1="733" x2="760.5" y2="797" stroke="#3c3f44" stroke-width="1"/>
<line x1="853.5" y1="733" x2="853.5" y2="797" stroke="#3c3f44" stroke-width="1"/>
<line x1="952.5" y1="733" x2="952.5" y2="797" stroke="#3c3f44" stroke-width="1"/>
<g fill="none" stroke="#c8c8c8" stroke-width="1.2"><rect x="790.3" y="757.4" width="8.4" height="5.6" rx="0.8"/><path d="M791.5,763V765.2H794.3"/><rect x="794.6" y="763.2" width="10.8" height="7" rx="0.8" fill="#000"/><path d="M796.5,771.6H803.5"/><rect x="811.6" y="758.6" width="8.8" height="4.8" rx="0.6"/><path d="M809.3,772V764.8Q809.3,763.5 810.6,763.5H821.4Q822.7,763.5 822.7,764.8V772"/><path d="M814.3,760.6V761.6M817.7,760.6V761.6" stroke-width="1.3"/></g>
<text x="879.6" y="760.0" font-size="19.2" fill="#d8d8d8" text-anchor="start" textLength="46.5" lengthAdjust="spacingAndGlyphs">13:14</text>
<text x="856.5" y="781.2" font-size="18.3" fill="#d8d8d8" text-anchor="start" textLength="92.6" lengthAdjust="spacingAndGlyphs">2022-09-30</text>
<rect x="959" y="733" width="64" height="64" fill="#212121"/>
<path d="M986.9,757.4 L979.2,749.7 L981.8,747.1 L973.0,746.7 L973.4,755.5 L976.0,752.9 L983.7,760.6Z" fill="none" stroke="#e6e6e6" stroke-width="1.25" stroke-linejoin="round"/>
<path d="M998.3,760.6 L1006.0,752.9 L1008.6,755.5 L1009.0,746.7 L1000.2,747.1 L1002.8,749.7 L995.1,757.4Z" fill="none" stroke="#e6e6e6" stroke-width="1.25" stroke-linejoin="round"/>
<path d="M983.7,768.3 L976.0,776.1 L973.3,773.5 L973.0,782.3 L981.8,781.9 L979.1,779.2 L986.9,771.3Z" fill="none" stroke="#e6e6e6" stroke-width="1.25" stroke-linejoin="round"/>
<path d="M995.1,771.3 L1002.9,779.2 L1000.2,781.9 L1009.0,782.3 L1008.7,773.5 L1006.0,776.1 L998.3,768.3Z" fill="none" stroke="#e6e6e6" stroke-width="1.25" stroke-linejoin="round"/>
<rect x="1030" y="0" width="250" height="800" fill="#1c2f3e"/>
<rect x="1035.5" y="0.5" width="239" height="63" fill="#212121" stroke="#3a3a3a" stroke-width="1"/>
<rect x="1034" y="68" width="242" height="72" fill="#212121"/>
<rect x="1034" y="144" width="242" height="72" fill="#212121"/>
<rect x="1034" y="220" width="242" height="72" fill="#212121"/>
<rect x="1035" y="297" width="78" height="56" fill="#212121"/>
<rect x="1035" y="325" width="78" height="28" fill="#2187e3"/>
<rect x="1117" y="297" width="158.5" height="56" fill="#212121"/>
<rect x="1035" y="359" width="78" height="56" fill="#212121"/>
<rect x="1035" y="387" width="78" height="28" fill="#2187e3"/>
<rect x="1117" y="359" width="158.5" height="56" fill="#212121"/>
<rect x="1034" y="420" width="242" height="71" fill="#212121"/>
<rect x="1155" y="457" width="117" height="30" fill="#2187e3"/>
<path d="M1063,24L1054.5,32.5L1063,41" fill="none" stroke="#1e9be6" stroke-width="3.2" stroke-linecap="round" stroke-linejoin="round"/>
<text x="1131.5" y="38.0" font-size="20.3" fill="#d8d8d8" text-anchor="start" textLength="47.7" lengthAdjust="spacingAndGlyphs">FREQ</text>
<text x="1074.1" y="95.9" font-size="20.3" fill="#d8d8d8" text-anchor="start" textLength="161.8" lengthAdjust="spacingAndGlyphs">Frequency(Meter)</text>
<text x="1085.5" y="125.4" font-size="18.5" fill="#2b8fe8" text-anchor="start" textLength="138.1" lengthAdjust="spacingAndGlyphs">600.000000 MHz</text>
<text x="1074.1" y="172.5" font-size="20.3" fill="#d8d8d8" text-anchor="start" textLength="161.8" lengthAdjust="spacingAndGlyphs">Center Frequency</text>
<text x="1085.5" y="201.5" font-size="18.5" fill="#d8d8d8" text-anchor="start" textLength="138.1" lengthAdjust="spacingAndGlyphs">515.000000 MHz</text>
<text x="1130.8" y="248.0" font-size="20.3" fill="#d8d8d8" text-anchor="start" textLength="46.4" lengthAdjust="spacingAndGlyphs">Span</text>
<text x="1085.5" y="277.3" font-size="18.5" fill="#d8d8d8" text-anchor="start" textLength="138.1" lengthAdjust="spacingAndGlyphs">970.000000 MHz</text>
<text x="1054.6" y="315.8" font-size="18.5" fill="#d8d8d8" text-anchor="start" textLength="37.6" lengthAdjust="spacingAndGlyphs">Man</text>
<text x="1054.0" y="343.4" font-size="18.5" fill="#ffffff" text-anchor="start" textLength="39.7" lengthAdjust="spacingAndGlyphs">Auto</text>
<text x="1150.4" y="319.0" font-size="19.5" fill="#d8d8d8" text-anchor="start" textLength="90.0" lengthAdjust="spacingAndGlyphs">Start Freq</text>
<text x="1131.3" y="344.1" font-size="18.5" fill="#d8d8d8" text-anchor="start" textLength="128.3" lengthAdjust="spacingAndGlyphs">30.000000 MHz</text>
<text x="1054.6" y="378.0" font-size="18.5" fill="#d8d8d8" text-anchor="start" textLength="37.6" lengthAdjust="spacingAndGlyphs">Man</text>
<text x="1054.0" y="405.5" font-size="18.5" fill="#ffffff" text-anchor="start" textLength="39.7" lengthAdjust="spacingAndGlyphs">Auto</text>
<text x="1151.4" y="380.5" font-size="19.5" fill="#d8d8d8" text-anchor="start" textLength="87.4" lengthAdjust="spacingAndGlyphs">Stop Freq</text>
<text x="1124.2" y="406.6" font-size="18.5" fill="#d8d8d8" text-anchor="start" textLength="143.5" lengthAdjust="spacingAndGlyphs">1.000000000 GHz</text>
<text x="1107.3" y="447.5" font-size="19.9" fill="#d8d8d8" text-anchor="start" textLength="95.2" lengthAdjust="spacingAndGlyphs">Scale Type</text>
<text x="1081.5" y="477.0" font-size="19.2" fill="#d8d8d8" text-anchor="start" textLength="29.6" lengthAdjust="spacingAndGlyphs">Log</text>
<text x="1195.8" y="477.0" font-size="19.2" fill="#ffffff" text-anchor="start" textLength="35.5" lengthAdjust="spacingAndGlyphs">Line</text>
</svg>
</body></html>
